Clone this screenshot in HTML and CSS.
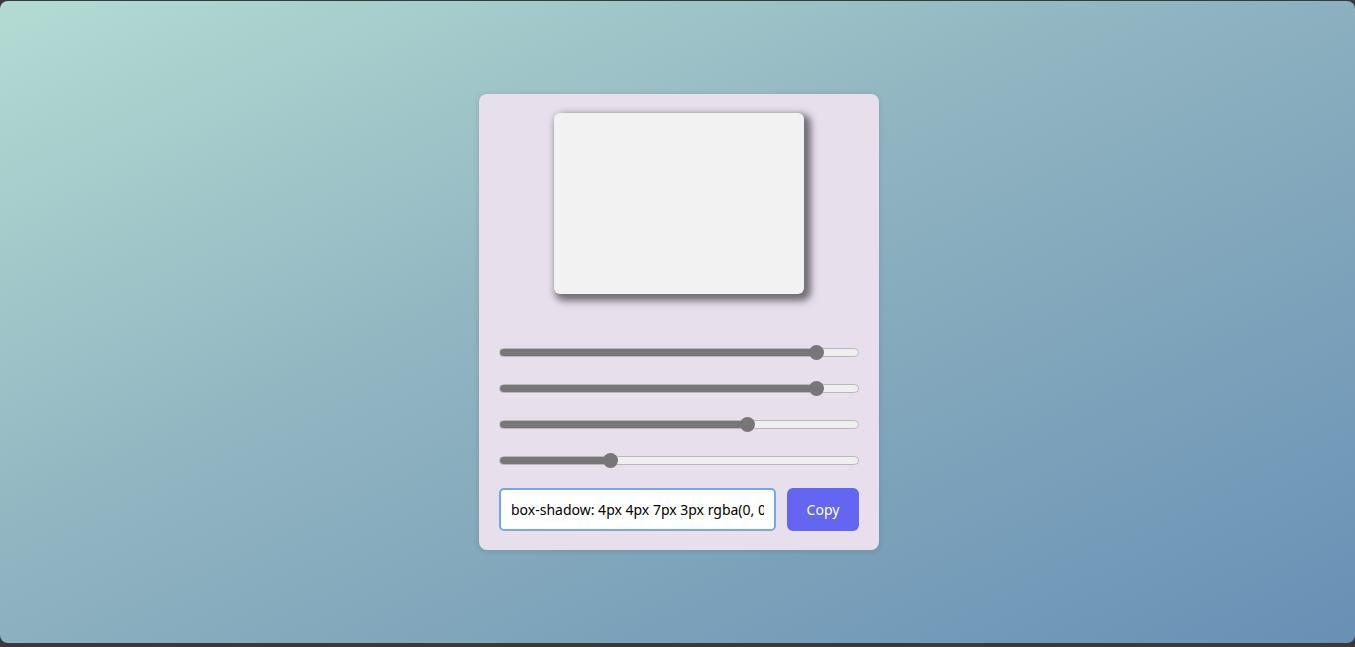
FILE: index.html
```html
<!DOCTYPE html>
<html lang="en">
<head>
<meta charset="utf-8">
<title>Box Shadow Generator</title>
<link rel="stylesheet" href="styles.css">
</head>
<body>
<div class="screen">
  <div class="card">
    <div class="preview-area">
      <div class="preview"></div>
    </div>
    <div class="sliders">
      <input class="slider" type="range" min="-5" max="5" value="4" style="--f:0.9">
      <input class="slider" type="range" min="-5" max="5" value="4" style="--f:0.9">
      <input class="slider" type="range" min="0" max="10" value="7" style="--f:0.7">
      <input class="slider" type="range" min="0" max="10" value="3" style="--f:0.3">
    </div>
    <div class="output">
      <input class="code" type="text" value="box-shadow: 4px 4px 7px 3px rgba(0, 0, 0, 0.5);" readonly>
      <button class="copy">Copy</button>
    </div>
  </div>
</div>
</body>
</html>
```
FILE: styles.css
```css
* { box-sizing: border-box; }
html, body { margin: 0; padding: 0; }
body {
  background: #3a3a3a;
  height: 647px;
  overflow: hidden;
  font-family: "Noto Sans", "Open Sans", sans-serif;
}
.screen {
  margin-top: 1px;
  height: 642px;
  border-radius: 8px;
  background: linear-gradient(to bottom right, #b4dbd3 0%, #8fb3c0 45%, #6890b5 100%);
  display: flex;
  align-items: center;
  justify-content: center;
  padding-left: 3px;
}
.card {
  width: 400px;
  height: 456px;
  background: #e7dfec;
  border-radius: 8px;
  padding: 19px 20px;
  box-shadow: 0 1px 6px rgba(0, 0, 0, 0.12);
  display: flex;
  flex-direction: column;
}
.preview-area {
  display: flex;
  justify-content: center;
}
.preview {
  width: 250px;
  height: 181px;
  background: #f2f2f2;
  border-radius: 6px;
  box-shadow: 4px 4px 7px 3px rgba(0, 0, 0, 0.5);
}
.sliders {
  margin-top: 50px;
  display: flex;
  flex-direction: column;
  gap: 20px;
}
.slider {
  -webkit-appearance: none;
  appearance: none;
  display: block;
  width: 360px;
  height: 16px;
  margin: 0;
  background: transparent;
}
.slider::-webkit-slider-runnable-track {
  box-sizing: border-box;
  height: 9px;
  border: 1px solid #b9b9b9;
  border-radius: 5px;
  background: linear-gradient(to right, #777777 0, #777777 calc(7.5px + (100% - 15px) * var(--f)), #efefef calc(7.5px + (100% - 15px) * var(--f)));
}
.slider::-webkit-slider-thumb {
  -webkit-appearance: none;
  appearance: none;
  width: 15px;
  height: 15px;
  border-radius: 50%;
  background: #777777;
  border: none;
  margin-top: -4px;
}
.output {
  margin-top: 20px;
  display: flex;
  gap: 11px;
}
.code {
  width: 277px;
  height: 43px;
  border: 2px solid #74a6ea;
  border-radius: 5px;
  padding: 0 10px;
  font-family: "Noto Sans", "Open Sans", sans-serif;
  font-size: 14px;
  color: #000;
  background: #fff;
  outline: none;
}
.copy {
  width: 72px;
  height: 43px;
  border: none;
  border-radius: 6px;
  background: #6466f1;
  color: #fff;
  font-family: "Noto Sans", "Open Sans", sans-serif;
  font-size: 14px;
  cursor: pointer;
}
```
